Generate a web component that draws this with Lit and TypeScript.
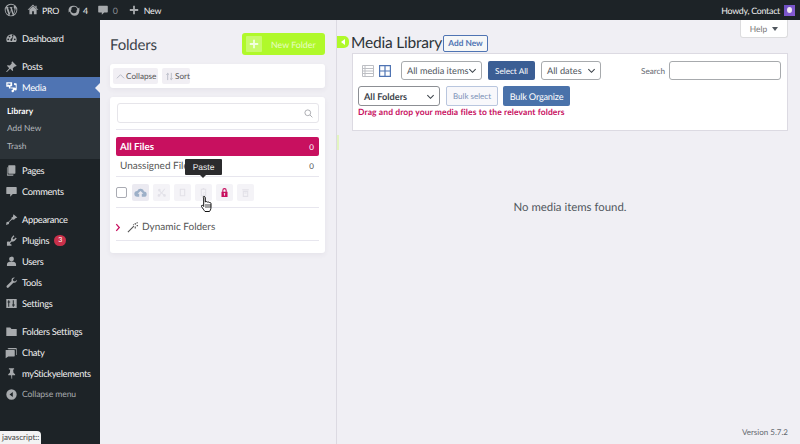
import { LitElement, html, css, svg } from "lit";
import { customElement } from "lit/decorators.js";

const ic = (d: string, size = 14, cls = "") => html`<svg class=${cls} width=${size} height=${size} viewBox="0 0 20 20" fill="currentColor">${svg`<path d=${d}></path>`}</svg>`;

const I = {
  wp: "M10 1a9 9 0 1 0 0 18 9 9 0 0 0 0-18zM2.3 10c0-1.1.2-2.2.7-3.100l3.600 10A7.700 7.700 0 0 1 2.300 10zm7.700 7.700c-.8 0-1.500-.1-2.200-.3l2.300-6.700 2.400 6.500a7.600 7.600 0 0 1-2.500.5zm1.100-11.300c.5 0 .9-.1.900-.1.400 0 .4-.7 0-.7 0 0-1.200.1-2 .1-.7 0-1.900-.1-1.900-.1-.5 0-.5.700-.1.700l.8.100 1.100 3.100-1.600 4.800L5.600 6.400c.5 0 .9-.1.900-.1.400 0 .4-.7 0-.7 0 0-1.200.1-2 .1h-.5A7.700 7.700 0 0 1 15.200 4.300h-.1c-.8 0-1.300.7-1.300 1.400 0 .6.400 1.200.8 1.800.3.500.6 1.200.6 2.200 0 .7-.3 1.500-.6 2.600l-.8 2.700-2.700-8.600zm2.800 10.300 2.300-6.800c.4-1.100.6-2 .6-2.700v-.8a7.700 7.700 0 0 1-2.900 10.300z",
  home: "M16 8.500v8.500h-4.500v-5h-3v5H4V8.500L10 3l6 5.500zM10 1 1 9.500h2.500L10 3.700l6.500 5.800H19l-3-2.800V3h-2v1.900z",
  refresh: "M10 3a7 7 0 0 1 6.600 4.700L19 6v6h-6l2.300-2.200A5.300 5.300 0 0 0 5 8H1.400A7 7 0 0 1 10 3zM1 14V8h6l-2.300 2.200A5.300 5.300 0 0 0 15 12h3.600A7 7 0 0 1 3.400 12.300z",
  bubble: "M3 3h14a1 1 0 0 1 1 1v9a1 1 0 0 1-1 1h-5l-4 4v-4H3a1 1 0 0 1-1-1V4a1 1 0 0 1 1-1z",
  plus: "M8.500 3h3v5.500H17v3h-5.500V17h-3v-5.500H3v-3h5.500z",
  gauge: "M10 3.500a8 8 0 0 0-8 8c0 1.500.4 2.800 1.100 4h13.800a8 8 0 0 0 1.100-4 8 8 0 0 0-8-8zM5 12.500a1.300 1.300 0 1 1 0-2.600 1.300 1.300 0 0 1 0 2.600zm2-4.300a1.300 1.300 0 1 1 0-2.600 1.300 1.300 0 0 1 0 2.600zM10 14a1.800 1.800 0 0 1-1-3.300l4-4-2 5.500A1.800 1.800 0 0 1 10 14zm.6-8.500a1.200 1.200 0 1 1 0 .1zM15 12.500a1.300 1.300 0 1 1 0-2.600 1.300 1.300 0 0 1 0 2.600z",
  pin: "M11 2l7 7-1.500 1-1-.5-3.500 3 .5 3.500-1 1-3.500-3.500L3 18.500l-1 0 0-1 4.500-5L3 9l1-1 3.500.5 3-3.500-.5-1z",
  media: "M2 2h9v6H8.500v3.500H6V9H2zm2 2v2.500l1.500-1 1.500 1 1.500-1V4zM14 3l4 1v8.500a2 2 0 1 1-1.500-1.900V6.500L14 6zM9 10h6v2.500a2.500 2.500 0 0 0-1 2V16l-1 .6v.4a2 2 0 1 1-1-3.700V11.500H9z",
  pages: "M6 2h9a1 1 0 0 1 1 1v11a1 1 0 0 1-1 1H6a1 1 0 0 1-1-1V3a1 1 0 0 1 1-1zM3 5h1v11h9v1a1 1 0 0 1-1 1H4a1 1 0 0 1-1-1z",
  brush: "M13 2l6 5-3.500 1.500-1.500 2-3-.5L6.500 14l-.5 3-4.500 1.500 1-4.500 3-.5 4.500-4.500L10 7l2-1z",
  plug: "M13 2l1.500 1.500-3 3 2 2 3-3L18 7l-3 3.500c-1.300 1.300-3 1.500-4.500 1L8 14v1.500l2 .5v2H3v-6l2-.5 2.500.5 2-2.500c-.5-1.500-.2-3.200 1-4.500z",
  user: "M10 2.500a3.700 3.700 0 1 1 0 7.500 3.700 3.700 0 0 1 0-7.500zM3 17v-2.500c0-2.500 2.500-4 4-4h6c1.500 0 4 1.500 4 4V17z",
  wrench: "M15 2.500c-2.700-.8-5 1.200-5 3.800 0 .5 0 .9.200 1.300L2.700 15a2 2 0 0 0 2.800 2.800l7.400-7.500c2.800.9 5.600-1.300 5.300-4.500l-2.700 2.500-2.700-.7-.7-2.600z",
  settings: "M2 3h16v14H2zm3 2v2H4v1.500h1V15h1.500V8.500H8V7H6.500V5zm7 0v6.500h-1V13h1v2h1.500v-2h1.500v-1.500h-1.500V5z",
  folder: "M2 4h6l2 2h8v11H2z",
  chat: "M4 3h13a1 1 0 0 1 1 1v10h-1V5H5V4H4zM1 6h13a1 1 0 0 1 1 1v8a1 1 0 0 1-1 1H5l-4 3z",
  thumb: "M6 2h8v2h-1.500l.5 5 2.500 2v1.500h-4.500v5.500h-1l-.5-5.500H5V11l2.500-2 .5-5H6z",
  back: "M10 2a8 8 0 1 1 0 16 8 8 0 0 1 0-16zm2 4L7 10l5 4z",
  cloud: "M15.500 8.500A5.500 5.500 0 0 0 5 7.500 4.500 4.500 0 0 0 5 16.500h3V12H5.500L10 7.500l4.500 4.500H12v4.500h3.500a4 4 0 0 0 0-8z",
  scissors: "M6 3a2.500 2.500 0 0 1 1.800 4.200L10 9.500l5-6.500h2l-5.600 8 2.800 2.100a2.500 2.500 0 1 1-1.200 1.400L10 12l-2.200 2.500a2.500 2.500 0 1 1-1.300-1.400L8.700 11 6.500 8A2.500 2.500 0 1 1 6 3z",
  copy: "M6 3h8a1 1 0 0 1 1 1v12a1 1 0 0 1-1 1H6a1 1 0 0 1-1-1V4a1 1 0 0 1 1-1zm1 2v10h6V5z",
  paste: "M5 3h3l1-1h2l1 1h3v14H5zm2 2v10h3v-5h3V5zm4 6v4l2-2v-2z",
  lock: "M10 2a4 4 0 0 1 4 4v2.500h1.500V18h-11V8.500H6V6a4 4 0 0 1 4-4zM8 8.500h4V6a2 2 0 0 0-4 0zM10 11a1.500 1.500 0 0 0-.7 2.800V16h1.400v-2.200A1.500 1.500 0 0 0 10 11z",
  trash: "M4 4h12v2H4zm1 3h10v11H5zm2 2v7h6V9zm1 1h4v2H8z",
};

@customElement("app-root")
export class AppRoot extends LitElement {
  static styles = css`
    :host { display: block; width: 800px; height: 444px; overflow: hidden; position: relative; font-family: Lato, "Open Sans", sans-serif; color: #3c434a; text-rendering: geometricPrecision; }
    * { box-sizing: border-box; }
    .page { display: grid; grid-template-columns: 100px 1fr; grid-template-rows: 20px 424px; width: 800px; height: 444px; background: #f0eff4; }
    .bar { grid-column: 1 / 3; background: #1d2327; color: #f0f0f1; display: flex; align-items: center; font-size: 8.800px; letter-spacing: -.25px; }
    .bar svg { color: #a7aaad; display: block; }
    .bi { display: flex; align-items: center; gap: 4px; }
    .logo { margin-left: 4px; }
    .home { margin-left: 9px; gap: 3px; }
    .pro { width: 15px; }
    .upd { margin-left: 11px; gap: 3px; }
    .cmt { margin-left: 9px; color: #8c8f94; }
    .new { margin-left: 10px; }
    .howdy { margin-left: auto; margin-right: 5px; display: flex; align-items: center; gap: 4px; }
    .avatar { width: 11px; height: 11px; background: linear-gradient(135deg,#6b4fc0,#8a5cd6); display: flex; align-items: center; justify-content: center; }
    .avatar i { width: 5px; height: 6px; border-radius: 50%; background: #f0e8f4; display: block; }
    .side { background: #1d2327; padding-top: 8px; position: relative; }
    .mi { height: 21px; display: flex; align-items: center; color: #f0f0f1; font-size: 9.300px; letter-spacing: -.3px; padding-left: 5px; gap: 4px; white-space: nowrap; }
    .mi svg { color: #a7aaad; flex: none; width: 13px; height: 13px; }
    .gap { margin-bottom: 7px; }
    .cur { background: #4f74b3; color: #fff; position: relative; }
    .cur svg { color: #fff; }
    .cur::after { content: ""; position: absolute; right: 0; top: 6px; border: 5px solid transparent; border-right-color: #f0eff4; border-left: 0; }
    .sub { background: #2c3338; padding: 4px 0 4px; margin-bottom: 1px; }
    .sub div { height: 17.500px; display: flex; align-items: center; padding-left: 7px; font-size: 8.400px; color: #b4b9be; }
    .sub .on { color: #fff; font-weight: 700; }
    .mi.collapse { color: #a7aaad; font-size: 8.600px; letter-spacing: -.1px; }
    .collapse svg { color: #a7aaad; }
    .badge { width: 12px; height: 11px; border-radius: 6px; background: #c9304a; color: #fff; font-size: 7px; display: flex; align-items: center; justify-content: center; margin-left: 1px; }
    .status { position: absolute; left: 0; bottom: 0; width: 41px; height: 13px; background: #f3f3f3; border-top-right-radius: 4px; color: #444; font-size: 8px; padding: 1px 0 0 2px; white-space: nowrap; }
    .content { display: grid; grid-template-columns: 237px 1fr; min-height: 0; position: relative; }
    .fold { padding: 13px 11px 0 10px; border-right: 1px solid #dcdae2; height: 424px; }
    .fh { display: flex; justify-content: space-between; align-items: center; height: 22px; margin-bottom: 9px; }
    .fh h2 { margin: 2px 0 0; font-size: 15px; letter-spacing: -.2px; font-weight: 400; color: #3c434a; line-height: 20px; }
    .newf { width: 83px; height: 22px; background: #b0f92a; border-radius: 3px; color: #e8fcc5; font-size: 8.800px; display: flex; align-items: center; padding-left: 4px; gap: 9px; }
    .newf b { width: 16px; height: 16px; background: #c8fb6c; display: flex; align-items: center; justify-content: center; border-radius: 1px; color: #f2fee0; }
    .tools { height: 24px; background: #fff; border-radius: 3px; display: flex; align-items: center; padding-left: 3px; gap: 4px; margin-bottom: 9px; box-shadow: 0 2px 5px rgba(60,50,90,.06); }
    .tools span { height: 16px; background: #f1eff4; border-radius: 2px; display: flex; align-items: center; padding: 0 3px; gap: 1px; font-size: 8.200px; color: #555; }
    .tools svg { color: #b6b9c4; flex: none; }
    .tools span:first-child { width: 45px; }
    .tools span:last-child { width: 28px; }
    .card { background: #fff; height: 156px; border-radius: 3px; padding: 6px 6px 0 6px; box-shadow: 0 2px 5px rgba(60,50,90,.06); }
    .search { height: 20px; margin: 0 0 6px 1px; border: 1px solid #e6e5ea; border-radius: 3px; display: flex; justify-content: flex-end; align-items: center; padding-right: 5px; color: #a5a6ab; }
    .ln { height: 1px; background: #e7e6ee; }
    .all { margin-top: 7px; height: 19px; background: #c8105f; border-radius: 2px; color: #fff; display: flex; justify-content: space-between; align-items: center; padding: 0 5px 0 4px; font-size: 9.800px; font-weight: 700; }
    .all small { font-size: 8px; font-weight: 400; }
    .un { height: 20px; display: flex; justify-content: space-between; align-items: center; padding: 0 5px 0 4px; font-size: 10px; color: #555; }
    .un small { font-size: 8px; }
    .acts { display: flex; align-items: center; height: 30px; gap: 4px; padding: 0; }
    .chk { width: 11px; height: 11px; border: 1px solid #a9abb3; border-radius: 2px; margin-right: 1px; }
    .acts span { width: 17px; height: 17px; background: #f4f3f7; border-radius: 2px; display: flex; align-items: center; justify-content: center; color: #e2e1e8; }
    .acts span.cl { background: #ebeaf1; color: #9db0c8; }
    .acts span.lk { color: #c8105f; }
    .dyn { height: 32px; display: flex; align-items: center; font-size: 10px; color: #555; padding-top: 6px; margin-left: -1px; }
    .dyn i { width: 12px; }
    .dyn i svg { display: block; }
    .dyn .wand { color: #555; margin-right: 4px; }
    .main { padding: 13px 12px 0 14px; display: flex; flex-direction: column; height: 424px; position: relative; }
    .mh { display: flex; align-items: center; gap: 5px; height: 20px; }
    .mh h1 { margin: 0; font-size: 15.500px; letter-spacing: -.2px; font-weight: 400; color: #2c3338; white-space: nowrap; width: 87px; }
    .add { height: 17px; width: 45px; border: 1px solid #4f74b3; border-radius: 2px; background: #f6f7f7; color: #4f74b3; font-size: 8.300px; font-weight: 700; display: flex; align-items: center; justify-content: center; }
    .box { height: 78px; background: #fff; border: 1px solid #dcdae2; padding: 7px 6px 0 5px; margin-left: 1px; }
    .row { display: flex; align-items: center; }
    .r1 { height: 19px; }
    .r2 { margin-top: 6px; height: 20px; gap: 6px; }
    .vi { margin-left: 4px; color: #bdbfc4; }
    .vg { margin-left: 5px; color: #4f74b3; }
    .sel { height: 19px; border: 1px solid #a7aaad; border-radius: 3px; background: #fff; font-size: 9.200px; color: #50575e; display: flex; align-items: center; justify-content: space-between; padding: 0 4px 0 5px; white-space: nowrap; }
    .sel svg { color: #3c434a; flex: none; }
    .s1 { width: 81px; margin-left: 10px; }
    .sa { width: 47px; height: 19px; background: #3b5e94; color: #fff; border-radius: 2px; margin: 0 6px; font-size: 8.200px; display: flex; align-items: center; justify-content: center; }
    .s2 { width: 60px; }
    .slabel { margin-left: 40px; font-size: 8.200px; color: #646970; width: 28px; }
    .inp { width: 112px; height: 19px; border: 1px solid #a7aaad; border-radius: 3px; background: #fff; }
    .s3 { width: 82px; height: 20px; font-weight: 700; color: #3c434a; font-size: 9.200px; border-color: #8c8f94; }
    .bs { width: 52px; height: 20px; border: 1px solid #b9c6de; border-radius: 2px; color: #7e93b8; font-size: 8px; background: #f8f8fb; display: flex; align-items: center; justify-content: center; white-space: nowrap; }
    .bo { width: 67px; height: 20px; margin-left: -1px; background: #4a72aa; color: #fff; border-radius: 2px; font-size: 9.200px; letter-spacing: -.2px; display: flex; align-items: center; justify-content: center; white-space: nowrap; }
    .drag { font-size: 8.500px; font-weight: 700; color: #c8105f; margin-top: 0; white-space: nowrap; line-height: 12px; letter-spacing: .1px; }
    .empty { margin-top: 70px; text-align: center; font-size: 11.400px; color: #50575e; margin-left: 1px; }
    .ver { margin-top: auto; margin-bottom: 7px; text-align: right; font-size: 8px; color: #646970; }
    .help { position: absolute; top: 0; right: 12px; width: 48px; height: 18px; background: #fff; border: 1px solid #dcdcde; border-top: 0; border-radius: 0 0 3px 3px; color: #777; font-size: 8.400px; display: flex; align-items: center; justify-content: center; gap: 5px; }
    .help i { border: 3px solid transparent; border-top: 4px solid #50575e; border-bottom: 0; display: block; }
    .toggle { position: absolute; left: 237px; top: 16px; width: 12px; height: 12px; background: #b0f92a; border-radius: 0 5px 5px 0; display: flex; align-items: center; justify-content: center; }
    .toggle i { border: 3px solid transparent; border-right: 4px solid #fff; border-left: 0; display: block; }
    .grip { position: absolute; left: 237px; top: 115px; width: 2px; height: 15px; background: #e3f5c0; }
    .tip { position: absolute; left: 85px; top: 139px; width: 37px; height: 16px; background: #2b2b2d; color: #eee; border-radius: 1px; font-size: 8.500px; font-family: "Liberation Sans", sans-serif; display: flex; align-items: center; justify-content: center; }
    .tip::after { content: ""; position: absolute; left: 15px; bottom: -3px; border: 3.500px solid transparent; border-top-color: #2b2b2d; border-bottom: 0; }
    .hand { position: absolute; left: 100px; top: 175px; }
  `;

  private item(icon: string, label: string, gap = false) {
    return html`<div class="mi ${gap ? "gap" : ""}">${ic(icon)}<span>${label}</span></div>`;
  }

  render() {
    const chev = html`<svg width="9" height="9" viewBox="0 0 10 10" fill="none" stroke="currentColor" stroke-width="1.200"><path d="M1.500 3.500 5 7l3.500-3.500"></path></svg>`;
    return html`
      <div class="page">
        <div class="bar">
          <span class="bi logo">${ic(I.wp, 14)}</span>
          <span class="bi home">${ic(I.home, 12)}<span class="pro">PRO</span></span>
          <span class="bi upd">${ic(I.refresh, 12)}<span>4</span></span>
          <span class="bi cmt">${ic(I.bubble, 12)}<span>0</span></span>
          <span class="bi new">${ic(I.plus, 12)}<span>New</span></span>
          <span class="howdy">Howdy, Contact <span class="avatar"><i></i></span></span>
        </div>
        <div class="side">
          ${this.item(I.gauge, "Dashboard", true)}
          ${this.item(I.pin, "Posts")}
          <div class="mi cur">${ic(I.media)}<span>Media</span></div>
          <div class="sub"><div class="on">Library</div><div>Add New</div><div>Trash</div></div>
          ${this.item(I.pages, "Pages")}
          ${this.item(I.bubble, "Comments", true)}
          ${this.item(I.brush, "Appearance")}
          <div class="mi">${ic(I.plug)}<span>Plugins</span><span class="badge">3</span></div>
          ${this.item(I.user, "Users")}
          ${this.item(I.wrench, "Tools")}
          ${this.item(I.settings, "Settings", true)}
          ${this.item(I.folder, "Folders Settings")}
          ${this.item(I.chat, "Chaty")}
          ${this.item(I.thumb, "myStickyelements")}
          <div class="mi collapse">${ic(I.back)}<span>Collapse menu</span></div>
          <div class="status">javascript::</div>
        </div>
        <div class="content">
          <div class="fold">
            <div class="fh"><h2>Folders</h2><div class="newf"><b>${ic(I.plus, 12)}</b>New Folder</div></div>
            <div class="tools">
              <span><svg width="9" height="9" viewBox="0 0 10 10" fill="none" stroke="currentColor"><path d="M1 7 5 3l4 4"></path></svg>Collapse</span>
              <span><svg width="9" height="9" viewBox="0 0 10 10" fill="none" stroke="currentColor"><path d="M3 9V1.500M1.500 3 3 1.500 4.500 3M7 1v7.500M5.500 7 7 8.500 8.500 7"></path></svg>Sort</span>
            </div>
            <div class="card">
              <div class="search"><svg width="9" height="9" viewBox="0 0 10 10" fill="none" stroke="currentColor" stroke-width="1"><circle cx="4.200" cy="4.200" r="3.200"></circle><path d="m6.700 6.700 2.600 2.600"></path></svg></div>
              <div class="ln"></div>
              <div class="all"><span>All Files</span><small>0</small></div>
              <div class="un"><span>Unassigned Files</span><small>0</small></div>
              <div class="ln"></div>
              <div class="acts">
                <i class="chk"></i>
                <span class="cl">${ic(I.cloud, 13)}</span>
                <span>${ic(I.scissors, 11)}</span>
                <span>${ic(I.copy, 11)}</span>
                <span>${ic(I.paste, 11)}</span>
                <span class="lk">${ic(I.lock, 11)}</span>
                <span>${ic(I.trash, 11)}</span>
              </div>
              <div class="ln"></div>
              <div class="dyn"><i><svg width="6" height="9" viewBox="0 0 7 10" fill="none" stroke="#c8105f" stroke-width="1.500"><path d="m1.500 1 3.500 4-3.500 4"></path></svg></i>
                <svg class="wand" width="11" height="11" viewBox="0 0 12 12" fill="none" stroke="currentColor" stroke-width="1.200"><path d="M1 11 7.500 4.500M9 1v2M9 5v2M6.500 3h1M10.500 4H12M10.500 1.500l1-1"></path></svg>
                Dynamic Folders</div>
              <div class="ln"></div>
            </div>
          </div>
          <div class="main">
            <div class="mh"><h1>Media Library</h1><div class="add">Add New</div></div>
            <div class="box">
              <div class="row r1">
                <svg class="vi" width="12" height="12" viewBox="0 0 12 12" fill="none" stroke="currentColor"><path d="M.500.500h11v11H.500zM.500 3.500h11M.500 6h11M.500 8.500h11M3 .500v11"></path></svg>
                <svg class="vg" width="12" height="12" viewBox="0 0 12 12" fill="none" stroke="currentColor" stroke-width="1.200"><path d="M.600.600h10.800v10.800H.600zM6 .600v10.800M.600 6h10.800"></path></svg>
                <div class="sel s1">All media items ${chev}</div>
                <div class="sa">Select All</div>
                <div class="sel s2">All dates ${chev}</div>
                <div class="slabel">Search</div>
                <div class="inp"></div>
              </div>
              <div class="row r2">
                <div class="sel s3">All Folders ${chev}</div>
                <div class="bs">Bulk select</div>
                <div class="bo">Bulk Organize</div>
              </div>
              <div class="drag">Drag and drop your media files to the relevant folders</div>
            </div>
            <div class="empty">No media items found.</div>
            <div class="ver">Version 5.7.2</div>
            <div class="help">Help <i></i></div>
          </div>
          <div class="toggle"><i></i></div>
          <div class="grip"></div>
          <div class="tip">Paste</div>
          <svg class="hand" width="14" height="18" viewBox="0 0 14 18"><path d="M4 1.500c.8 0 1.300.5 1.300 1.300V7c.3-.6 1.800-.6 2 .2.400-.5 1.700-.4 1.900.4.500-.3 1.800-.2 1.800 1v3.700c0 2-1 3.500-1.500 4.200H5c-.8-1-2.500-3.500-3.500-5-.5-.8.500-1.700 1.300-1l.9 1V2.800C2.700 2 3.200 1.500 4 1.500z" fill="#fff" stroke="#111" stroke-width="1"></path><path d="M6 9v4M8 9v4M10 9v4" stroke="#111" stroke-width=".8"></path></svg>
        </div>
      </div>
    `;
  }
}
